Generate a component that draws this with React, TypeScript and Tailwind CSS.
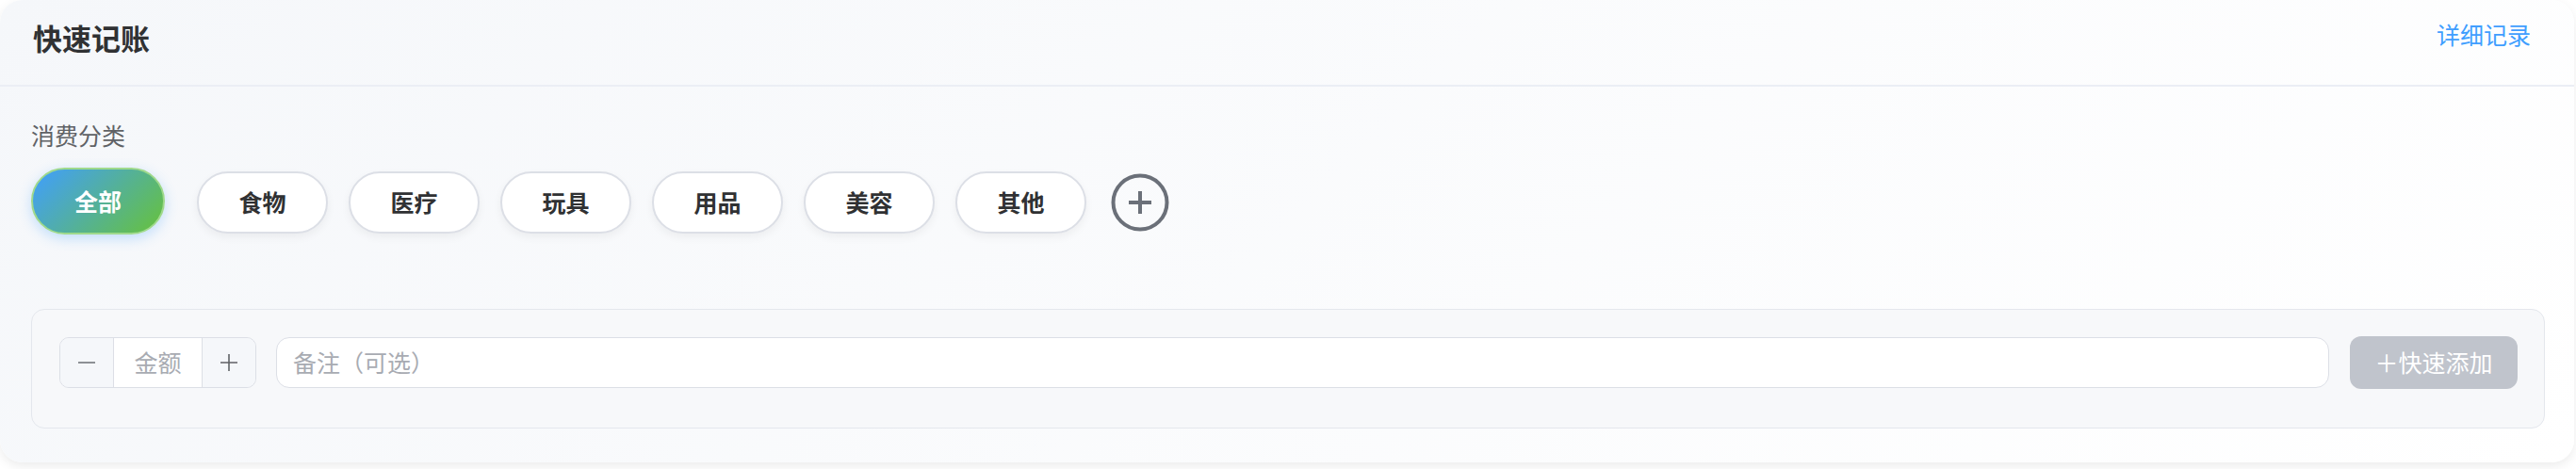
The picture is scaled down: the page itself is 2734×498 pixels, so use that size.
const categories = ["食物", "医疗", "玩具", "用品", "美容", "其他"];

const PlusCircle = () => (
  <svg width="62" height="62" viewBox="0 0 62 62" fill="none">
    <circle cx="31" cy="31" r="28.5" stroke="#6b7079" strokeWidth="4" />
    <path d="M31 19v24M19 31h24" stroke="#6b7079" strokeWidth="4" />
  </svg>
);

const QuickRecord = () => {
  return (
    <div className="w-[2732px] rounded-[24px] bg-[linear-gradient(135deg,#f5f7fa_0%,#ffffff_100%)] shadow-[0_4px_12px_rgba(0,0,0,0.08)] pb-[36px]">
      <div className="flex items-start justify-between h-[92px] pl-[35px] pr-[46px] pt-[24px] border-b-2 border-[#ebeef5]">
        <h2 className="text-[31px] leading-none font-bold text-[#303133]">快速记账</h2>
        <span className="text-[25px] leading-none text-[#409eff] cursor-pointer">详细记录</span>
      </div>

      <div className="pl-[33px] pr-[31px] pt-[39px]">
        <div className="text-[25px] leading-none text-[#606266]">消费分类</div>

        <div className="flex items-start mt-[22px]">
          <button className="w-[142px] h-[71px] rounded-full border-2 border-[#9fd98c] bg-[linear-gradient(135deg,#409eff_0%,#67c23a_100%)] text-white text-[25px] font-bold shadow-[0_4px_14px_rgba(64,158,255,0.3)]">
            全部
          </button>
          <div className="flex gap-[22px] ml-[34px] mt-[4px]">
            {categories.map((c) => (
              <button
                key={c}
                className="w-[139px] h-[66px] rounded-full border-2 border-[#dcdfe6] bg-white text-[25px] font-bold text-[#303133] shadow-[0_4px_10px_rgba(0,0,0,0.05)]"
              >
                {c}
              </button>
            ))}
          </div>
          <div className="ml-[26px] mt-[6px]">
            <PlusCircle />
          </div>
        </div>

        <div className="mt-[79px] rounded-[14px] border border-[#e4e7ed] bg-[#f7f8fa] pl-[29px] pr-[28px] pt-[28px] pb-[41px]">
          <div className="flex items-center h-[56px]">
            <div className="flex w-[209px] h-[54px] rounded-[10px] border border-[#dcdfe6] overflow-hidden">
              <div className="w-[57px] flex items-center justify-center bg-[#f5f7fa] border-r border-[#dcdfe6]">
                <svg width="20" height="20" viewBox="0 0 20 20">
                  <path d="M1 10h18" stroke="#8d9095" strokeWidth="2" />
                </svg>
              </div>
              <div className="flex-1 flex items-center justify-center bg-white text-[25px] text-[#a8abb2]">金额</div>
              <div className="w-[57px] flex items-center justify-center bg-[#f5f7fa] border-l border-[#dcdfe6]">
                <svg width="20" height="20" viewBox="0 0 20 20">
                  <path d="M10 1v18M1 10h18" stroke="#606266" strokeWidth="1.6" />
                </svg>
              </div>
            </div>
            <div className="flex-1 ml-[21px] h-[54px] rounded-[14px] border border-[#dcdfe6] bg-white flex items-center pl-[17px] text-[25px] text-[#a8abb2]">
              备注（可选）
            </div>
            <button className="ml-[22px] w-[178px] h-[56px] rounded-[12px] bg-[#c0c4cc] text-white text-[25px]">
              ＋快速添加
            </button>
          </div>
        </div>
      </div>
    </div>
  );
};

export default function App() {
  return (
    <div className="w-[2734px] h-[498px] bg-white font-['Noto_Sans_CJK_SC','Noto_Sans',sans-serif]">
      <QuickRecord />
    </div>
  );
}
